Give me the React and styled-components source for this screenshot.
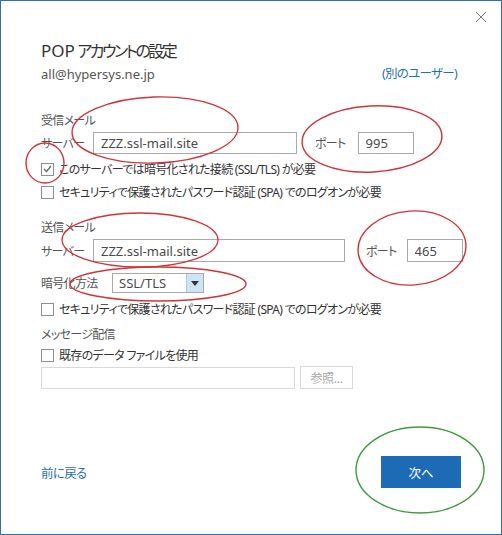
import React from 'react';
import styled, { createGlobalStyle } from 'styled-components';

const GlobalStyle = createGlobalStyle`
  html, body {
    margin: 0;
    padding: 0;
    background: #ffffff;
  }
  body {
    font-family: "Noto Sans", "Noto Sans CJK JP", sans-serif;
    font-feature-settings: "palt" 1;
  }
`;

const Dialog = styled.div`
  position: relative;
  box-sizing: border-box;
  width: 502px;
  height: 535px;
  border: 1px solid #2d72b0;
  padding: 0 40px;
  display: flex;
  flex-direction: column;
  color: #444;
  font-size: 12px;
  letter-spacing: -0.7px;
`;

const TopBar = styled.div`
  display: flex;
  justify-content: flex-end;
  height: 30px;
  padding-top: 10px;
  box-sizing: border-box;
  margin-right: -26px;
`;

const CloseButton = styled.button`
  width: 12px;
  height: 12px;
  padding: 0;
  border: none;
  background: none;
  display: flex;
`;

const Title = styled.h1`
  margin: 9px 0 0;
  font-size: 17px;
  line-height: 22px;
  font-weight: normal;
  letter-spacing: 0;
  color: #333;
`;

const TitleJp = styled.span`
  font-size: 16px;
  letter-spacing: -2.5px;
  margin-left: -2px;
`;

const AccountRow = styled.div`
  display: flex;
  justify-content: space-between;
  align-items: center;
  margin-top: 3px;
  padding-right: 4px;
  line-height: 18px;
`;

const Email = styled.span`
  color: #555;
  font-size: 13px;
  letter-spacing: 0;
`;

const Link = styled.a`
  color: #1f6fba;
  font-size: 12.5px;
  text-decoration: none;
`;

const SectionLabel = styled.div`
  margin-top: ${(p) => p.$top}px;
  line-height: 16px;
  color: #555;
`;

const FieldRow = styled.div`
  display: flex;
  align-items: center;
  margin-top: ${(p) => p.$top}px;
`;

const FieldLabel = styled.span`
  width: ${(p) => p.$width}px;
  color: #555;
  flex-shrink: 0;
  white-space: nowrap;
`;

const PortLabel = styled.span`
  margin-left: ${(p) => p.$gap}px;
  margin-right: ${(p) => p.$after}px;
  color: #555;
  white-space: nowrap;
  flex-shrink: 0;
`;

const TextBox = styled.input`
  box-sizing: border-box;
  width: ${(p) => p.$width}px;
  height: ${(p) => p.$height || 22}px;
  border: 1px solid ${(p) => (p.$muted ? '#d9d9d9' : '#a9a9a9')};
  padding: 0 7px;
  font-family: inherit;
  font-size: 13px;
  font-weight: 400;
  letter-spacing: 0;
  color: #4a4a4a;
  background: #fff;
  outline: none;
  flex-shrink: 0;
`;

const CheckRow = styled.label`
  display: flex;
  align-items: center;
  gap: 5px;
  height: 18px;
  margin-top: ${(p) => p.$top}px;
  color: #333;
  white-space: nowrap;
`;

const Box = styled.span`
  box-sizing: border-box;
  width: 13px;
  height: 13px;
  border: 1px solid #8e8e8e;
  background: #fff;
  display: flex;
  align-items: center;
  justify-content: center;
  flex-shrink: 0;
`;

const SelectBox = styled.div`
  box-sizing: border-box;
  display: flex;
  width: 92px;
  height: 20px;
  border: 1px solid #a9a9a9;
  margin-left: 11px;
`;

const SelectValue = styled.span`
  flex: 1;
  padding-left: 6px;
  line-height: 18px;
  font-size: 13px;
  letter-spacing: 0;
  color: #4a4a4a;
`;

const SelectArrow = styled.span`
  width: 16px;
  background: #cde4f7;
  border-left: 1px solid #a6cbe9;
  display: flex;
  align-items: center;
  justify-content: center;
`;

const BrowseButton = styled.button`
  box-sizing: border-box;
  width: 53px;
  height: 23px;
  margin-left: 5px;
  border: 1px solid #d9d9d9;
  background: #fff;
  color: #a8a8a8;
  font-family: inherit;
  font-size: 12px;
  letter-spacing: -0.3px;
  padding: 0;
`;

const Footer = styled.div`
  display: flex;
  justify-content: space-between;
  align-items: center;
  margin-top: auto;
  padding-bottom: 46px;
`;

const NextButton = styled.button`
  width: 80px;
  height: 32px;
  border: none;
  background: #1d6bb5;
  color: #fff;
  font-family: inherit;
  font-size: 12.5px;
  padding: 0;
`;

const Annotations = styled.svg`
  position: absolute;
  top: -1px;
  left: -1px;
  pointer-events: none;
`;

const Check = ({ checked }) => (
  <Box>
    {checked && (
      <svg width="9" height="8" viewBox="0 0 9 8">
        <polyline points="1,4 3.5,6.5 8,1" fill="none" stroke="#666" strokeWidth="1.2" />
      </svg>
    )}
  </Box>
);

const marks = [
  { cx: 155, cy: 130, rx: 83, ry: 33, r: -2, c: '#d2333a' },
  { cx: 372, cy: 139, rx: 70, ry: 33, r: -3, c: '#d2333a' },
  { cx: 45, cy: 163, rx: 19, ry: 20, r: 0, c: '#d2333a' },
  { cx: 140, cy: 240, rx: 78, ry: 27, r: 0, c: '#d2333a' },
  { cx: 412, cy: 248, rx: 54, ry: 37, r: -4, c: '#d2333a' },
  { cx: 158, cy: 284, rx: 88, ry: 17, r: 0, c: '#d2333a' },
  { cx: 420, cy: 470, rx: 64, ry: 43, r: 0, c: '#3e9a3e' },
];

const App = () => (
  <>
    <GlobalStyle />
    <Dialog>
      <TopBar>
        <CloseButton aria-label="close">
          <svg width="12" height="12" viewBox="0 0 12 12">
            <path d="M1 1 L11 11 M11 1 L1 11" stroke="#777" strokeWidth="1" />
          </svg>
        </CloseButton>
      </TopBar>
      <Title>
        POP <TitleJp>アカウントの設定</TitleJp>
      </Title>
      <AccountRow>
        <Email>all@hypersys.ne.jp</Email>
        <Link href="#">(別のユーザー)</Link>
      </AccountRow>

      <SectionLabel $top={30}>受信メール</SectionLabel>
      <FieldRow $top={3}>
        <FieldLabel $width={52}>サーバー</FieldLabel>
        <TextBox $width={204} defaultValue="ZZZ.ssl-mail.site" readOnly />
        <PortLabel $gap={18} $after={12}>ポート</PortLabel>
        <TextBox $width={56} defaultValue="995" readOnly />
      </FieldRow>
      <CheckRow $top={6}>
        <Check checked />
        このサーバーでは暗号化された接続 (SSL/TLS) が必要
      </CheckRow>
      <CheckRow $top={5}>
        <Check />
        セキュリティで保護されたパスワード認証 (SPA) でのログオンが必要
      </CheckRow>

      <SectionLabel $top={19}>送信メール</SectionLabel>
      <FieldRow $top={3}>
        <FieldLabel $width={52}>サーバー</FieldLabel>
        <TextBox $width={252} $height={23} defaultValue="ZZZ.ssl-mail.site" readOnly />
        <PortLabel $gap={21} $after={10}>ポート</PortLabel>
        <TextBox $width={56} $height={23} defaultValue="465" readOnly />
      </FieldRow>
      <FieldRow $top={11}>
        <FieldLabel $width={60}>暗号化方法</FieldLabel>
        <SelectBox>
          <SelectValue>SSL/TLS</SelectValue>
          <SelectArrow>
            <svg width="8" height="5" viewBox="0 0 8 5">
              <polygon points="0,0 8,0 4,5" fill="#333" />
            </svg>
          </SelectArrow>
        </SelectBox>
      </FieldRow>
      <CheckRow $top={7}>
        <Check />
        セキュリティで保護されたパスワード認証 (SPA) でのログオンが必要
      </CheckRow>

      <SectionLabel $top={9}>メッセージ配信</SectionLabel>
      <CheckRow $top={3}>
        <Check />
        既存のデータ ファイルを使用
      </CheckRow>
      <FieldRow $top={2}>
        <TextBox $width={254} $muted readOnly />
        <BrowseButton>参照...</BrowseButton>
      </FieldRow>

      <Footer>
        <Link href="#">前に戻る</Link>
        <NextButton>次へ</NextButton>
      </Footer>

      <Annotations width="502" height="535" viewBox="0 0 502 535">
        {marks.map((m, i) => (
          <ellipse
            key={i}
            cx={m.cx}
            cy={m.cy}
            rx={m.rx}
            ry={m.ry}
            transform={`rotate(${m.r} ${m.cx} ${m.cy})`}
            fill="none"
            stroke={m.c}
            strokeWidth="1.4"
          />
        ))}
      </Annotations>
    </Dialog>
  </>
);

export default App;
